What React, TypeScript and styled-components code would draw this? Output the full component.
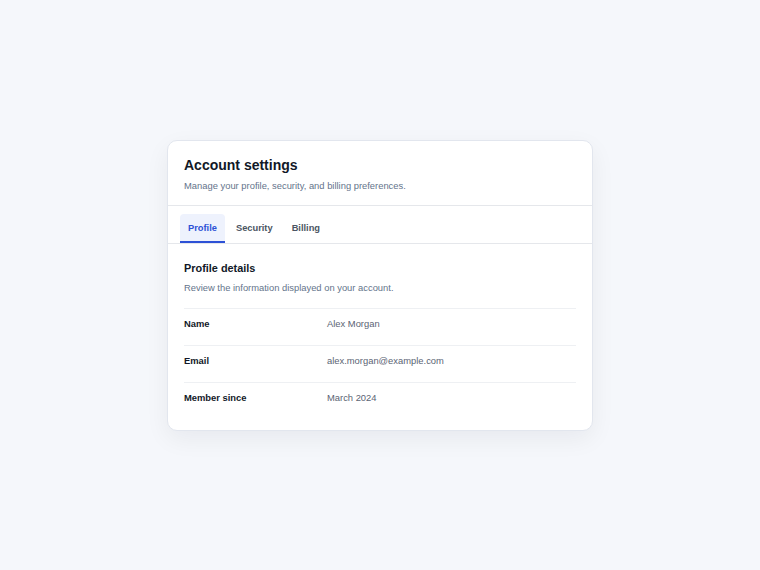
import { useState } from "react";
import styled, { createGlobalStyle } from "styled-components";

const GlobalStyle = createGlobalStyle`
  html, body {
    margin: 0;
    padding: 0;
    background: #f5f7fb;
    font-family: "Liberation Sans", Arial, sans-serif;
  }
`;

interface DetailRow {
  label: string;
  value: string;
}

const TABS = ["Profile", "Security", "Billing"];

const DETAILS: DetailRow[] = [
  { label: "Name", value: "Alex Morgan" },
  { label: "Email", value: "alex.morgan@example.com" },
  { label: "Member since", value: "March 2024" },
];

const App = () => {
  const [activeTab, setActiveTab] = useState("Profile");

  return (
    <>
      <GlobalStyle />
      <Page>
        <Card>
          <Header>
            <Title>Account settings</Title>
            <Subtitle>Manage your profile, security, and billing preferences.</Subtitle>
          </Header>
          <TabBar role='tablist'>
            {TABS.map((tab) => (
              <Tab
                key={tab}
                role='tab'
                $active={tab === activeTab}
                onClick={() => setActiveTab(tab)}>
                {tab}
              </Tab>
            ))}
          </TabBar>
          <Body>
            <SectionTitle>Profile details</SectionTitle>
            <SectionText>Review the information displayed on your account.</SectionText>
            <DetailList>
              {DETAILS.map((row) => (
                <Row key={row.label}>
                  <Label>{row.label}</Label>
                  <Value>{row.value}</Value>
                </Row>
              ))}
            </DetailList>
          </Body>
        </Card>
      </Page>
    </>
  );
};

export default App;

const Page = styled.div`
  min-height: 100vh;
  display: flex;
  align-items: center;
  justify-content: center;
`;

const Card = styled.section`
  width: 426px;
  box-sizing: border-box;
  background: #ffffff;
  border: 1px solid #e2e6ee;
  border-radius: 10px;
  box-shadow: 0 8px 24px rgba(15, 23, 42, 0.06);
  overflow: hidden;
`;

const Header = styled.header`
  padding: 15px 16px 12px;
  border-bottom: 1px solid #e5e7eb;
`;

const Title = styled.h1`
  margin: 0;
  font-size: 14px;
  line-height: 18px;
  font-weight: 700;
  color: #111827;
`;

const Subtitle = styled.p`
  margin: 5px 0 0;
  font-size: 9.4px;
  line-height: 14px;
  color: #64748b;
`;

const TabBar = styled.div`
  display: flex;
  gap: 3px;
  padding: 8px 12px 0;
  border-bottom: 1px solid #e5e7eb;
`;

const Tab = styled.button<{ $active: boolean }>`
  border: none;
  border-bottom: 2px solid ${(p) => (p.$active ? "#2d51d6" : "transparent")};
  border-radius: 4px 4px 0 0;
  background: ${(p) => (p.$active ? "#eef2fd" : "transparent")};
  color: ${(p) => (p.$active ? "#2d51d6" : "#4b5563")};
  padding: 8px 8px 6px;
  font-family: inherit;
  font-size: 9.3px;
  line-height: 13px;
  font-weight: 700;
  cursor: pointer;
`;

const Body = styled.div`
  padding: 17px 16px 11px;
`;

const SectionTitle = styled.h2`
  margin: 0;
  font-size: 10.9px;
  line-height: 14px;
  font-weight: 700;
  color: #111827;
`;

const SectionText = styled.p`
  margin: 6px 0 13px;
  font-size: 9.4px;
  line-height: 14px;
  color: #64748b;
`;

const DetailList = styled.dl`
  margin: 0;
`;

const Row = styled.div`
  display: grid;
  grid-template-columns: 143px 1fr;
  padding: 8px 0 14px;
  border-top: 1px solid #eef0f3;
  font-size: 9.4px;
  line-height: 14px;
`;

const Label = styled.dt`
  font-weight: 700;
  color: #111827;
`;

const Value = styled.dd`
  margin: 0;
  color: #5b6474;
`;
